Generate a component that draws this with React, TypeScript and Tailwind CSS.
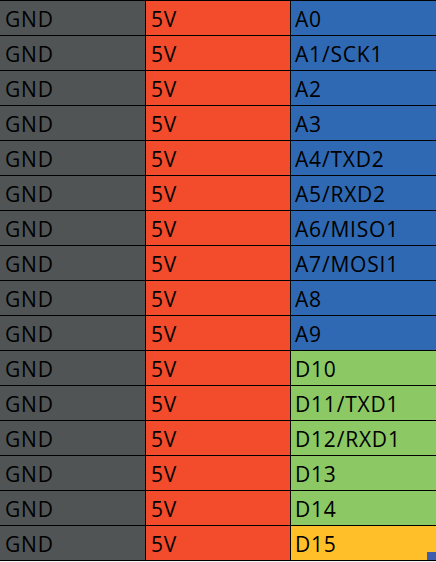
const rows: [string, string][] = [
  ["A0", "blue"],
  ["A1/SCK1", "blue"],
  ["A2", "blue"],
  ["A3", "blue"],
  ["A4/TXD2", "blue"],
  ["A5/RXD2", "blue"],
  ["A6/MISO1", "blue"],
  ["A7/MOSI1", "blue"],
  ["A8", "blue"],
  ["A9", "blue"],
  ["D10", "green"],
  ["D11/TXD1", "green"],
  ["D12/RXD1", "green"],
  ["D13", "green"],
  ["D14", "green"],
  ["D15", "yellow"],
];

const pinBg: Record<string, string> = {
  blue: "bg-[#2f69b3]",
  green: "bg-[#8cc864]",
  yellow: "bg-[#ffbf29]",
};

export default function App() {
  return (
    <div className="w-[436px] h-[562px] bg-[#f2f2f2] font-['Open_Sans','Lato',sans-serif] text-[21px] tracking-[0.8px] text-black">
      <div className="grid grid-cols-[145px_144px_145px] gap-px bg-black border-t border-b border-black w-[436px]">
        {rows.map(([pin, color], i) => (
          <div key={pin} className="contents">
            <div className="h-[34px] bg-[#505455] pl-[5px] pt-[8px] leading-[20px]">GND</div>
            <div className="h-[34px] bg-[#f34c2c] pl-[5px] pt-[8px] leading-[20px]">5V</div>
            <div className={`relative h-[34px] ${pinBg[color]} pl-[4px] pt-[8px] leading-[20px]`}>
              {pin}
              {i === rows.length - 1 && (
                <span className="absolute right-0 bottom-0 w-[9px] h-[8px] bg-[#3f5fae]" />
              )}
            </div>
          </div>
        ))}
      </div>
    </div>
  );
}
